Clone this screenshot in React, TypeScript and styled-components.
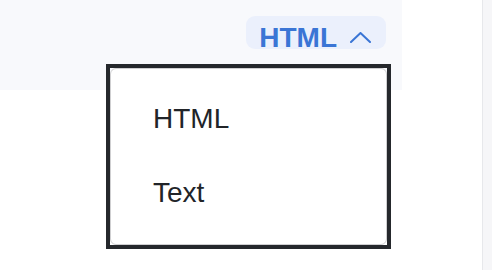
import React from "react";
import styled, { createGlobalStyle } from "styled-components";

const GlobalStyle = createGlobalStyle`
  html, body {
    margin: 0;
    padding: 0;
    background: #ffffff;
    font-family: "Liberation Sans", Arial, sans-serif;
  }
  #root {
    height: 100vh;
  }
`;

const Page = styled.div`
  display: flex;
  height: 100%;
`;

const Main = styled.div`
  flex: 0 0 482px;
  background: #ffffff;
`;

const Side = styled.div`
  flex: 1;
  border-left: 1px solid #e7e8eb;
  background: #f6f6f8;
`;

const Header = styled.header`
  width: 402px;
  height: 90px;
  box-sizing: border-box;
  padding: 16px 16px 0;
  display: flex;
  justify-content: flex-end;
  align-items: flex-start;
  background: #f8f9fc;
`;

const Picker = styled.div`
  position: relative;
`;

const Toggle = styled.button`
  display: flex;
  align-items: flex-start;
  gap: 13px;
  height: 33px;
  box-sizing: border-box;
  padding: 9px 15px 0 13px;
  border: none;
  border-radius: 9px;
  background: #ebf0fc;
  color: #3a75d5;
  font-family: inherit;
  font-size: 28px;
  font-weight: 700;
  line-height: 26px;
  cursor: pointer;
  overflow: visible;
`;

const Chevron = styled.svg`
  flex: none;
  margin-top: 7px;
`;

const Frame = styled.div`
  position: absolute;
  top: 48px;
  right: -5px;
  border: 4px solid #25282c;
`;

const Menu = styled.ul`
  list-style: none;
  margin: 0;
  width: 277px;
  box-sizing: border-box;
  padding: 13px 0 14px;
  border: 1px solid #cfcfd1;
  border-radius: 6px;
  background: #ffffff;
`;

const Item = styled.li`
  height: 74px;
  display: flex;
  align-items: center;
  padding-left: 42px;
  color: #212428;
  font-size: 28px;
  line-height: 74px;
  cursor: pointer;
`;

const formats = ["HTML", "Text"];

export default function App() {
  return (
    <>
      <GlobalStyle />
      <Page>
        <Main>
          <Header>
            <Picker>
              <Toggle type="button" aria-expanded="true">
                <span>HTML</span>
                <Chevron width="21" height="11" viewBox="0 0 21 11" fill="none">
                  <polyline
                    points="1,10 10.5,1 20,10"
                    stroke="#3a75d5"
                    strokeWidth="2"
                    strokeLinecap="round"
                    strokeLinejoin="round"
                  />
                </Chevron>
              </Toggle>
              <Frame>
                <Menu role="listbox">
                  {formats.map((f) => (
                    <Item key={f} role="option">
                      {f}
                    </Item>
                  ))}
                </Menu>
              </Frame>
            </Picker>
          </Header>
        </Main>
        <Side />
      </Page>
    </>
  );
}
